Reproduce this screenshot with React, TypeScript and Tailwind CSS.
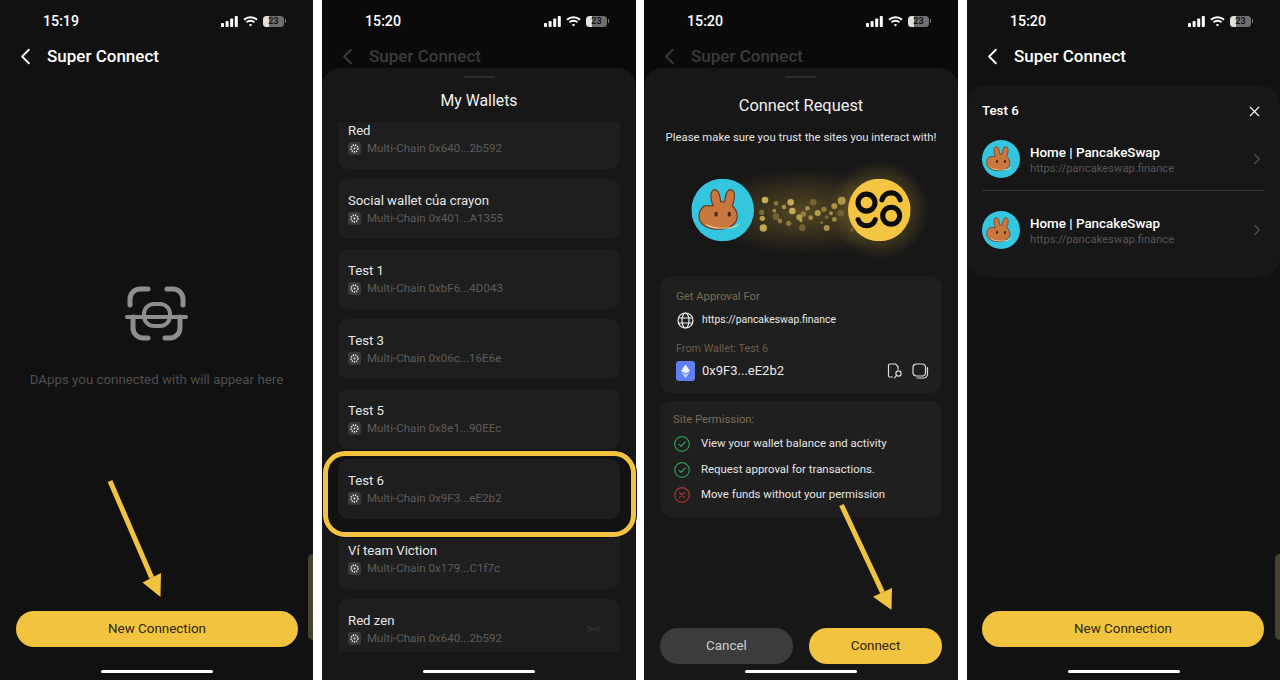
import { ChevronLeft, ChevronRight, X } from "lucide-react";

const wallets = [
  { name: "Red", addr: "0x640...2b592" },
  { name: "Social wallet của crayon", addr: "0x401...A1355" },
  { name: "Test 1", addr: "0xbF6...4D043" },
  { name: "Test 3", addr: "0x06c...16E6e" },
  { name: "Test 5", addr: "0x8e1...90EEc" },
  { name: "Test 6", addr: "0x9F3...eE2b2", picked: true },
  { name: "Ví team Viction", addr: "0x179...C1f7c" },
  { name: "Red zen", addr: "0x640...2b592", swap: true },
];

// [x, y, r, opacity] in 3x picture units
const particles = [
  [345, 120, 10, 0.85], [378, 130, 7, 0.45], [422, 127, 10, 0.8], [490, 127, 10, 0.3], [575, 122, 12, 0.65],
  [553, 138, 9, 0.65], [402, 141, 7, 0.6], [427, 153, 10, 0.8], [472, 145, 7, 0.6], [522, 148, 8, 0.45],
  [335, 157, 8, 0.4], [373, 152, 6, 0.55], [378, 170, 10, 0.3], [460, 162, 8, 0.45], [448, 172, 9, 0.7],
  [503, 159, 9, 0.7], [543, 160, 6, 0.6], [572, 160, 10, 0.25], [337, 175, 8, 0.75], [390, 183, 7, 0.5],
  [416, 190, 8, 0.45], [453, 182, 5, 0.6], [482, 173, 7, 0.6], [530, 172, 6, 0.3], [553, 178, 7, 0.6],
  [515, 188, 4, 0.45], [340, 204, 11, 0.8], [457, 203, 10, 0.3], [530, 204, 9, 0.65], [605, 210, 5, 0.25],
];

function Signal() {
  return (
    <svg width="17" height="11" viewBox="0 0 17 11" fill="currentColor">
      <rect x="0" y="7" width="3" height="4" rx="0.8" />
      <rect x="4.6" y="5" width="3" height="6" rx="0.8" />
      <rect x="9.2" y="2.5" width="3" height="8.5" rx="0.8" />
      <rect x="13.8" y="0" width="3" height="11" rx="0.8" />
    </svg>
  );
}

function Wifi() {
  return (
    <svg width="15" height="11" viewBox="0 0 15 11" fill="none" stroke="currentColor" strokeWidth="1.9">
      <path d="M1 3.8a9.4 9.4 0 0 1 13 0" />
      <path d="M3.5 6.3a5.8 5.8 0 0 1 8 0" />
      <path d="M7.5 10.6 5.9 8.8a2.4 2.4 0 0 1 3.2 0z" fill="currentColor" stroke="none" />
    </svg>
  );
}

function StatusBar({ time }: { time: string }) {
  return (
    <div className="flex h-[42px] shrink-0 items-center justify-between pl-[43px] pr-[27px] text-white">
      <span className="pt-[2px] text-[14.2px] font-medium">{time}</span>
      <div className="flex items-center gap-[5px]">
        <Signal />
        <Wifi />
        <div className="flex items-center">
          <div className="flex h-[11px] w-[21px] items-center justify-center rounded-[3.5px] bg-[linear-gradient(90deg,#e0e0e0_28%,#6f6f6f_28%)] text-[9px] font-semibold leading-none text-[#111]">
            23
          </div>
          <div className="ml-[1px] h-[4px] w-[1px] bg-[#777]" />
        </div>
      </div>
    </div>
  );
}

function Header({ dim }: { dim?: boolean }) {
  return (
    <div className={`flex h-[28px] shrink-0 items-center pl-[12px] ${dim ? "text-[#3b3b3b]" : "text-white"}`}>
      <ChevronLeft size={27} strokeWidth={1.6} />
      <span className="ml-[8px] pt-[1px] text-[17px] font-medium">Super Connect</span>
    </div>
  );
}

function HomeBar({ className }: { className: string }) {
  return <div className={`mx-auto mb-[7px] h-[3px] w-[112px] shrink-0 rounded-full bg-white ${className}`} />;
}

function Arrow({ from, tip, a, b }: { from: number[]; tip: number[]; a: number[]; b: number[] }) {
  return (
    <svg className="pointer-events-none absolute left-0 top-0" width="314" height="680">
      <line x1={from[0]} y1={from[1]} x2={(a[0] + b[0]) / 2} y2={(a[1] + b[1]) / 2} stroke="#f1c33f" strokeWidth="5" />
      <polygon points={`${tip[0]},${tip[1]} ${a[0]},${a[1]} ${b[0]},${b[1]}`} fill="#f1c33f" />
    </svg>
  );
}

function Ghost() {
  return <div className="absolute right-0 top-[554px] h-[86px] w-[5px] rounded-l-[8px] bg-[#47432e]" />;
}

function ChainDot() {
  return (
    <svg width="13" height="13" viewBox="0 0 13 13" className="shrink-0">
      <rect width="13" height="13" rx="3" fill="#3a3a3a" />
      <circle cx="6.5" cy="6.5" r="3.4" fill="none" stroke="#e8e8e8" strokeWidth="1.6" strokeDasharray="1.3 1" />
      <circle cx="6.5" cy="6.5" r="1" fill="#e8e8e8" />
    </svg>
  );
}

function WalletCard({ name, addr, swap, picked }: { name: string; addr: string; swap?: boolean; picked?: boolean }) {
  return (
    <div className={`flex h-[60px] shrink-0 items-center justify-between rounded-[10px] bg-[#1e1e1e] pl-[10px] pr-[19px] ${picked ? "relative z-10" : ""}`}>
      <div className="pt-[1px]">
        <div className="text-[13.2px] leading-[18px] text-[#e6e6e6]">{name}</div>
        <div className="flex items-center gap-[6px] text-[11.6px] leading-[17px] text-[#5c5c5c]">
          <ChainDot />
          <span>Multi-Chain {addr}</span>
        </div>
      </div>
      {swap && (
        <svg width="14" height="10" viewBox="0 0 14 10" fill="none" stroke="#303030" strokeWidth="1.1">
          <path d="M0 2 14 8" />
          <path d="M0 8 14 2" />
          <path d="M1 5h12" />
        </svg>
      )}
    </div>
  );
}

function Bunny() {
  return (
    <>
      <circle cx="31" cy="31" r="31" fill="#33c6de" />
      <path
        d="M21.5 27c-1.5-4-2.5-8-2-12 .5-3.400 3-5 5.500-3.600 2.600 1.500 3.500 6 4 11.600 1.300-.2 2.700-.2 4 0 .5-5.600 1.500-10.100 4-11.600 2.500-1.400 5 .2 5.500 3.600.5 4-.5 8-2 12 3 2.700 5 6 5 10.300 0 8.200-8.800 12.700-19 12.700s-19-4.500-19-12.700c0-4.300 2-7.600 5-10.300z"
        fill="#c9773f"
        stroke="#6a3a1f"
        strokeWidth="1.2"
      />
      <path d="M14 44c3.500 3 10 4.500 17 4.500s13.500-1.500 17-4.500c-1.500 3.700-8 5.400-17 5.400s-15.500-1.700-17-5.400z" fill="#f4dca8" />
      <ellipse cx="24.500" cy="35" rx="1.700" ry="2.600" fill="#4b2610" />
      <ellipse cx="37.500" cy="35" rx="1.700" ry="2.600" fill="#4b2610" />
    </>
  );
}

function Logo96() {
  return (
    <>
      <circle cx="31" cy="31" r="31" fill="#f4c542" />
      <g fill="none" stroke="#0c0c0c" strokeWidth="5" strokeLinecap="round">
        <circle cx="18.300" cy="23.700" r="8.400" />
        <circle cx="42.700" cy="36.700" r="8.400" />
        <path d="M33.600 21a9.300 9.300 0 0 1 18 0" />
        <path d="M10 40.500a9 9 0 0 0 17 0" />
      </g>
    </>
  );
}

function ConnectGraphic() {
  return (
    <svg width="300" height="110" viewBox="0 0 900 330" className="ml-[6px] mt-[14px] shrink-0">
      <defs>
        <radialGradient id="glow">
          <stop offset="0%" stopColor="#f1c33f" stopOpacity="0.35" />
          <stop offset="70%" stopColor="#f1c33f" stopOpacity="0.14" />
          <stop offset="100%" stopColor="#f1c33f" stopOpacity="0" />
        </radialGradient>
        <radialGradient id="band">
          <stop offset="0%" stopColor="#f1c33f" stopOpacity="0.28" />
          <stop offset="100%" stopColor="#f1c33f" stopOpacity="0" />
        </radialGradient>
      </defs>
      <ellipse cx="460" cy="155" rx="300" ry="130" fill="url(#band)" />
      <circle cx="688" cy="150" r="148" fill="url(#glow)" />
      {particles.map(([x, y, r, o], i) => (
        <circle key={i} cx={x} cy={y} r={r} fill="#e3c45c" opacity={o} />
      ))}
      <svg x="124" y="56" width="188" height="188" viewBox="0 0 62 62">
        <Bunny />
      </svg>
      <svg x="594" y="56" width="188" height="188" viewBox="0 0 62 62">
        <Logo96 />
      </svg>
    </svg>
  );
}

function Globe() {
  return (
    <svg width="17" height="17" viewBox="0 0 17 17" fill="none" stroke="#eee" strokeWidth="1.200">
      <circle cx="8.500" cy="8.500" r="7.500" />
      <ellipse cx="8.500" cy="8.500" rx="3.500" ry="7.500" />
      <path d="M1.500 6h14M1.500 11h14" />
    </svg>
  );
}

function EthBadge() {
  return (
    <svg width="19" height="20" viewBox="0 0 19 20" className="shrink-0">
      <rect width="19" height="20" rx="3" fill="#5f7fee" />
      <polygon points="9.500,3.500 14,10 9.500,12.600 5,10" fill="#ffffff" opacity="0.9" />
      <polygon points="9.500,13.800 13.600,11.300 9.500,17 5.400,11.300" fill="#ffffff" opacity="0.7" />
    </svg>
  );
}

function DocSearch() {
  return (
    <svg width="16" height="16" viewBox="0 0 16 16" fill="none" stroke="#ddd" strokeWidth="1.200" strokeLinecap="round">
      <path d="M5.500 14H3a1.500 1.500 0 0 1-1.500-1.500v-10A1.500 1.500 0 0 1 3 1h5.500L11 3.500V6" />
      <circle cx="11.500" cy="10.500" r="2.600" />
      <path d="M9.500 12.500 7.500 15" />
    </svg>
  );
}

function CopyIcon() {
  return (
    <svg width="17" height="16" viewBox="0 0 17 16" fill="none" stroke="#ddd" strokeWidth="1.200">
      <rect x="1" y="1" width="12.500" height="12" rx="3.500" />
      <path d="M15.500 4.500V11a4 4 0 0 1-4 4H5" strokeLinecap="round" />
    </svg>
  );
}

function Perm({ ok, text }: { ok: boolean; text: string }) {
  const color = ok ? "#2f9a55" : "#a63434";
  return (
    <div className="flex h-[18px] items-center gap-[11px] pl-[1px]">
      <svg width="16" height="16" viewBox="0 0 16 16" fill="none" stroke={color} strokeWidth="1.200" strokeLinecap="round">
        <circle cx="8" cy="8" r="7.300" />
        {ok ? <path d="m4.800 8.200 2.200 2.200 4.200-4.400" /> : <path d="m5.500 5.500 5 5m0-5-5 5" />}
      </svg>
      <span className="text-[11.4px] text-[#e4e4e4]">{text}</span>
    </div>
  );
}

function SiteRow() {
  return (
    <div className="flex h-[62px] items-center">
      <svg width="38" height="38" viewBox="0 0 62 62" className="shrink-0">
        <Bunny />
      </svg>
      <div className="ml-[10px] flex-1 pt-[1px]">
        <div className="text-[13.4px] font-medium leading-[17px] text-white">Home | PancakeSwap</div>
        <div className="text-[11.2px] leading-[15px] text-[#565656]">https://pancakeswap.finance</div>
      </div>
      <ChevronRight size={18} strokeWidth={1.5} className="mr-[-1px] text-[#555]" />
    </div>
  );
}

export default function App() {
  return (
    <div className="flex h-[680px] w-[1280px] overflow-hidden bg-white font-['Roboto',sans-serif]">
      {/* phone 1 */}
      <div className="relative flex h-full w-[313px] shrink-0 flex-col bg-[#111111]">
        <StatusBar time="15:19" />
        <Header />
        <svg width="120" height="90" viewBox="0 0 120 90" fill="none" stroke="#8e8e8e" strokeLinecap="round" className="ml-[100px] mt-[200px] shrink-0">
          <path d="M30 35v-6a10 10 0 0 1 10-10h8M67 19h6a10 10 0 0 1 10 10v6" strokeWidth="5" />
          <path d="M27 47h59" strokeWidth="4" />
          <rect x="44" y="34" width="26" height="22" rx="10" strokeWidth="4" />
          <path d="M33 47v11a10 10 0 0 0 10 10h5M80 47v11a10 10 0 0 1-10 10h-5" strokeWidth="5" />
        </svg>
        <p className="mt-[10px] text-center text-[13.3px] leading-5 text-[#4e4e4e]">DApps you connected with will appear here</p>
        <button className="ml-4 mr-[15px] mt-auto h-9 shrink-0 rounded-full bg-[#f1c33f] text-[13.4px] text-[#2c2410]">New Connection</button>
        <HomeBar className="mt-[23px]" />
        <Ghost />
        <Arrow from={[110, 481]} tip={[160.500, 597]} a={[142.500, 582.500]} b={[161, 573]} />
      </div>

      {/* phone 2 */}
      <div className="relative ml-[9px] flex h-full w-[314px] shrink-0 flex-col bg-[#0a0a0a]">
        <StatusBar time="15:20" />
        <Header dim />
        <div className="-mt-[2px] flex flex-1 flex-col rounded-t-[18px] bg-[#171717]">
          <div className="mx-auto mt-[8px] h-[2px] w-[32px] rounded-full bg-[#2e2e2e]" />
          <div className="mt-[12px] text-center text-[15.8px] leading-[22px] text-[#f0f0f0]">My Wallets</div>
          <div className="mx-4 mt-[10px] h-[530px] overflow-hidden">
            <div className="-mt-[13px] flex flex-col gap-[10px]">
              {wallets.map((w) => (
                <WalletCard key={w.name} {...w} />
              ))}
            </div>
          </div>
          <HomeBar className="mt-[18px]" />
        </div>
        <div className="pointer-events-none absolute left-[1px] top-[451px] h-[86px] w-[313px] rounded-[22px] border-[5px] border-[#f1c33f] bg-[#121212] shadow-[0_0_0_1px_#0c0c0c]" />
      </div>

      {/* phone 3 */}
      <div className="relative ml-[8px] flex h-full w-[314px] shrink-0 flex-col bg-[#0a0a0a]">
        <StatusBar time="15:20" />
        <Header dim />
        <div className="-mt-[2px] flex flex-1 flex-col rounded-t-[18px] bg-[#171717]">
          <div className="mx-auto mt-[8px] h-[2px] w-[32px] rounded-full bg-[#2e2e2e]" />
          <div className="mt-[17px] text-center text-[16.4px] leading-[22px] text-[#f0f0f0]">Connect Request</div>
          <div className="mt-[11px] text-center text-[11.35px] leading-[18px] text-[#e4e4e4]">Please make sure you trust the sites you interact with!</div>
          <ConnectGraphic />

          <div className="mx-4 mt-[6px] h-[117px] rounded-[12px] bg-[#1f1f1f] pl-4 pr-[13px] pt-[12px]">
            <div className="text-[11.3px] leading-[18px] text-[#7c6c50]">Get Approval For</div>
            <div className="mt-[4px] flex h-5 items-center gap-[8px] pl-[1px]">
              <Globe />
              <span className="text-[10.4px] text-[#e8e8e8]">https://pancakeswap.finance</span>
            </div>
            <div className="mt-[11px] text-[10.8px] leading-4 text-[#6b5d47]">From Wallet: Test 6</div>
            <div className="mt-[4px] flex h-5 items-center">
              <EthBadge />
              <span className="ml-[7px] flex-1 text-[13px] text-[#e8e8e8]">0x9F3...eE2b2</span>
              <DocSearch />
              <span className="w-[9px]" />
              <CopyIcon />
            </div>
          </div>

          <div className="mx-4 mt-[8px] flex h-[116px] flex-col gap-[7.5px] rounded-[12px] bg-[#1f1f1f] pl-[13px] pt-[10px]">
            <div className="-mb-[1.5px] text-[11.3px] leading-[18px] text-[#7c6c50]">Site Permission:</div>
            <Perm ok text="View your wallet balance and activity" />
            <Perm ok text="Request approval for transactions." />
            <Perm ok={false} text="Move funds without your permission" />
          </div>

          <div className="mx-4 mt-auto flex gap-4">
            <button className="h-9 flex-1 rounded-full bg-[#3c3c3c] text-[13.4px] text-[#cfcfcf]">Cancel</button>
            <button className="h-9 flex-1 rounded-full bg-[#f1c33f] text-[13.4px] text-[#2c2410]">Connect</button>
          </div>
          <HomeBar className="mt-[6px]" />
        </div>
        <Arrow from={[197.500, 505]} tip={[247.500, 610]} a={[229, 596.700]} b={[248, 588]} />
      </div>

      {/* phone 4 */}
      <div className="relative ml-[9px] flex h-full w-[313px] shrink-0 flex-col bg-[#111111]">
        <StatusBar time="15:20" />
        <Header />
        <div className="mt-[15px] h-[192px] rounded-[20px] bg-[#171717] px-[15px] pt-[17px]">
          <div className="flex h-[18px] items-center justify-between text-white">
            <span className="text-[13.3px] font-medium">Test 6</span>
            <X size={17} strokeWidth={1.6} className="mr-[2px]" />
          </div>
          <div className="mt-[8px]">
            <SiteRow />
            <div className="h-px bg-[#343434]" />
            <div className="mt-[8px]">
              <SiteRow />
            </div>
          </div>
        </div>
        <button className="ml-[15px] mr-4 mt-auto h-9 shrink-0 rounded-full bg-[#f1c33f] text-[13.4px] text-[#2c2410]">New Connection</button>
        <HomeBar className="mt-[23px]" />
        <Ghost />
      </div>
    </div>
  );
}
